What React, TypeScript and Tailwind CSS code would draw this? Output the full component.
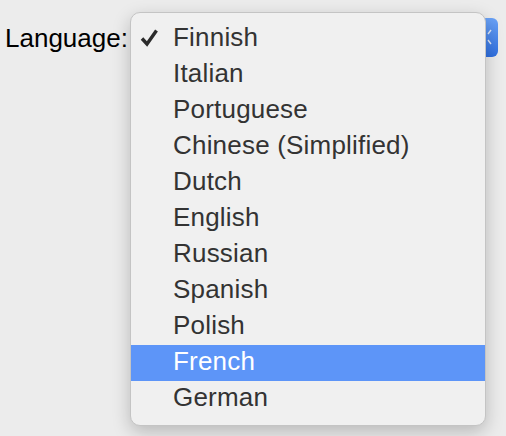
import React from "react";

const items = [
  "Finnish",
  "Italian",
  "Portuguese",
  "Chinese (Simplified)",
  "Dutch",
  "English",
  "Russian",
  "Spanish",
  "Polish",
  "French",
  "German",
];

export default function App() {
  return (
    <div
      className="relative w-[506px] h-[436px] overflow-hidden bg-[#ececec]"
      style={{ fontFamily: '"Liberation Sans", Arial, sans-serif' }}
    >
      <div className="flex items-center pl-[5px] pt-[16px]">
        <span className="text-[26px] leading-[39px] text-black w-[125px] pt-[3px]">Language:</span>
        <div className="w-[368px] h-[39px] rounded-[6px] bg-gradient-to-b from-[#6aa2f7] to-[#2f6fe0] flex justify-end items-center pr-[5px]">
          <svg width="6" height="22" viewBox="0 0 6 22">
            <path d="M1 8 L4 4" stroke="#dfe9fb" strokeWidth="1.4" fill="none" />
            <path d="M1 14 L4 18" stroke="#dfe9fb" strokeWidth="1.4" fill="none" />
          </svg>
        </div>
      </div>
      <div className="absolute left-[130px] top-[12px] w-[356px] py-[8px] rounded-[10px] bg-[#f0f0f0] border border-[#c4c4c4] shadow-[0_6px_18px_rgba(0,0,0,0.22)]">
        {items.map((it, i) => {
          const sel = it === "French";
          return (
            <div
              key={it}
              className={`flex items-center h-[36px] text-[26px] pb-[3px] ${sel ? "bg-[#5d95f8] text-white" : "text-[#333333]"}`}
            >
              <div className="w-[42px] pl-[9px] flex items-center">
                {i === 0 && (
                  <svg width="19" height="19" viewBox="0 0 19 19">
                    <path d="M2 10.5 L7 16 L16.5 2.5" stroke="#2b2b2b" strokeWidth="3.4" fill="none" strokeLinejoin="miter" strokeLinecap="butt" />
                  </svg>
                )}
              </div>
              <span className="tracking-[0.2px]">{it}</span>
            </div>
          );
        })}
      </div>
    </div>
  );
}
